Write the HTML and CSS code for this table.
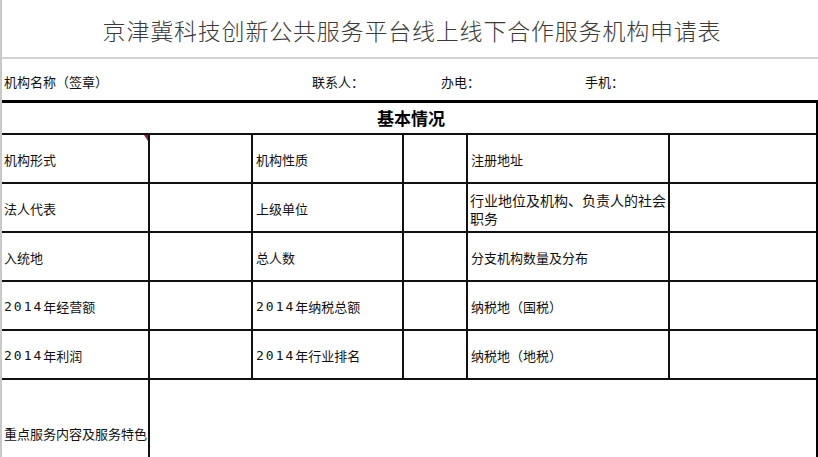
FILE: index.html
```html
<!DOCTYPE html>
<html lang="zh-CN">
<head>
<meta charset="utf-8">
<title>京津冀科技创新公共服务平台线上线下合作服务机构申请表</title>
<link rel="stylesheet" href="styles.css">
</head>
<body>
<div class="page">
  <header class="title">京津冀科技创新公共服务平台线上线下合作服务机构申请表</header>
  <div class="info">
    <span>机构名称（签章）</span>
    <span>联系人：</span>
    <span>办电：</span>
    <span>手机：</span>
  </div>
  <div class="sheet">
    <div class="cell head">基本情况</div>

    <div class="cell first"><span>机构形式</span><i class="note"></i></div>
    <div class="cell"></div>
    <div class="cell">机构性质</div>
    <div class="cell"></div>
    <div class="cell">注册地址</div>
    <div class="cell last"></div>

    <div class="cell first">法人代表</div>
    <div class="cell"></div>
    <div class="cell">上级单位</div>
    <div class="cell"></div>
    <div class="cell wide">行业地位及机构、负责人的社会职务</div>
    <div class="cell last"></div>

    <div class="cell first">入统地</div>
    <div class="cell"></div>
    <div class="cell">总人数</div>
    <div class="cell"></div>
    <div class="cell">分支机构数量及分布</div>
    <div class="cell last"></div>

    <div class="cell first"><span class="num">2014</span>年经营额</div>
    <div class="cell"></div>
    <div class="cell"><span class="num">2014</span>年纳税总额</div>
    <div class="cell"></div>
    <div class="cell">纳税地（国税）</div>
    <div class="cell last"></div>

    <div class="cell first"><span class="num">2014</span>年利润</div>
    <div class="cell"></div>
    <div class="cell"><span class="num">2014</span>年行业排名</div>
    <div class="cell"></div>
    <div class="cell">纳税地（地税）</div>
    <div class="cell last"></div>

    <div class="cell first tall nowrap">重点服务内容及服务特色</div>
    <div class="cell span5 tall"></div>
  </div>
</div>
</body>
</html>
```

FILE: styles.css
```css
html, body {
  margin: 0;
  padding: 0;
  background: #fff;
  overflow: hidden;
}

body {
  font-family: "Noto Sans CJK SC", "Noto Sans", sans-serif;
  color: #111;
  font-size: 13px;
}

.page {
  width: 816px;
  height: 457px;
  border-left: 2px solid #c9c9c9;
  overflow: hidden;
}

.title {
  height: 59px;
  border-bottom: 2px solid #d2d2d2;
  box-sizing: border-box;
  display: flex;
  align-items: center;
  justify-content: center;
  font-size: 23px;
  font-weight: 300;
  letter-spacing: 0.8px;
  color: #3a3a3a;
  padding-top: 2px;
  padding-left: 4px;
}

.info {
  height: 41px;
  display: grid;
  grid-template-columns: 308px 129px 144px auto;
  align-items: center;
  padding: 4px 0 0 2px;
  box-sizing: border-box;
  font-size: 13px;
}

.sheet {
  display: grid;
  grid-template-columns: 148px 103px 151px 64px 202px 146px;
  grid-template-rows: 32px repeat(5, 49px) 106px;
  border-top: 3px solid #000;
  border-right: 2px solid #000;
}

.cell {
  box-sizing: border-box;
  border-right: 2px solid #111;
  border-bottom: 2px solid #111;
  display: flex;
  align-items: center;
  padding: 2px 2px 0 3px;
  position: relative;
  line-height: 18px;
}

.cell.first {
  padding-left: 2px;
}

.cell.last {
  border-right: 0;
}

.cell.head {
  grid-column: 1 / span 6;
  border-right: 0;
  justify-content: center;
  font-weight: 700;
  font-size: 17px;
  color: #000;
  padding: 0 0 0 4px;
}

.cell.wide {
  font-size: 14px;
  padding-left: 2px;
}

.cell.span5 {
  grid-column: 2 / span 5;
  border-right: 0;
}

.cell.tall {
  border-bottom: 0;
}

.cell.nowrap {
  white-space: nowrap;
  padding-right: 0;
}

.num {
  font-family: "DejaVu Sans Mono", monospace;
  font-size: 13px;
  letter-spacing: 2px;
}

.note {
  position: absolute;
  top: 0;
  right: 0;
  width: 0;
  height: 0;
  border-top: 6px solid #8e1b3c;
  border-left: 4px solid transparent;
}
```
